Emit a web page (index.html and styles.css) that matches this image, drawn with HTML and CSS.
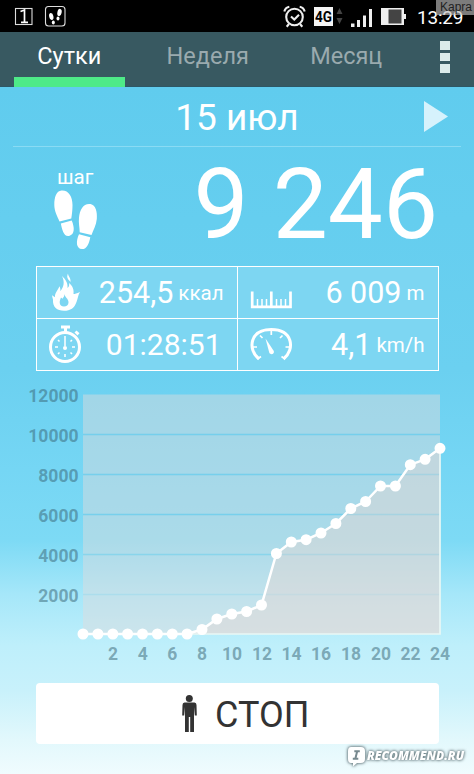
FILE: index.html
```html
<!DOCTYPE html>
<html lang="ru">
<head>
<meta charset="utf-8">
<title>Шагомер</title>
<link rel="stylesheet" href="styles.css">
</head>
<body>
<main class="screen">
  <header class="status">
    <svg class="status-left" width="60" height="32" viewBox="0 0 60 32">
      <g fill="none" stroke="#ddd" stroke-width="1.1">
        <rect x="5.500" y="8.500" width="16.500" height="16"/>
        <rect x="35.500" y="6.500" width="19.500" height="19.500" rx="3"/>
        <path d="M10.500 11.500 14.500 10V22M11 22.300h7" stroke="#fff" stroke-width="1.700"/>
      </g>
      <g fill="#fff">
        <ellipse cx="41.300" cy="16.500" rx="2.100" ry="3.600" transform="rotate(-12 41.300 16.500)"/>
        <ellipse cx="43.300" cy="22.500" rx="1.500" ry="2"/>
        <ellipse cx="49.500" cy="12.500" rx="2.100" ry="3.700" transform="rotate(12 49.500 12.500)"/>
        <ellipse cx="48" cy="18.500" rx="1.500" ry="2"/>
      </g>
    </svg>
    <svg class="status-right" width="130" height="32" viewBox="280 0 130 32">
      <g fill="none" stroke="#eee" stroke-width="2.100">
        <circle cx="294.500" cy="17" r="8.300"/>
        <path d="M284.300 11.500q1-4 5-4.700M304.700 11.500q-1-4-5-4.700M289 24l-2.300 2.700M300 24l2.300 2.700M291 16.500l3.300 3 4.700-4.700"/>
      </g>
      <rect x="314" y="7" width="19" height="19" fill="#f4f4f4"/>
      <text class="net" x="315" y="22" textLength="17" lengthAdjust="spacingAndGlyphs">4G</text>
      <path d="M336.500 14l3-6 3 6zM336.500 18l3 6 3-6z" fill="#444"/>
      <path d="M351 23.500h3.500V27H351zM357 20h3v7h-3zM363 15.500h3V27h-3zM369 9h3v18h-3z" fill="#eee"/>
      <path d="M381 8h23v6h2v5h-2v6h-23z" fill="#eee"/>
      <path d="M388.500 9.500h13v14h-13z" fill="#444"/>
    </svg>
    <span class="clock">13:29</span>
    <span class="tag">Kapra</span>
  </header>
  <nav class="tabs">
    <a class="tab active">Сутки</a>
    <a class="tab">Неделя</a>
    <a class="tab">Месяц</a>
    <span class="more"><i></i><i></i><i></i></span>
  </nav>
  <section class="date">
    <h1>15 июл</h1>
    <svg class="next" width="24" height="31" viewBox="0 0 24 31"><path d="M0 0 24 15.500 0 31z" fill="#d6f2fc"/></svg>
  </section>
  <section class="steps">
    <div class="step-label">
      <span>шаг</span>
      <svg width="44" height="60" viewBox="54 190 44 60" fill="#fff">
        <path d="M61.500 190.500c7-.5 11 6 11 14.500 0 5-.6 9.500-1.200 13.500L59.500 221.500c-2-5-5.200-10-5.200-16.500 0-8 2-14 7.200-14.500z"/>
        <path d="M60.800 223.500l10.900-3c3 7 3.200 14-2.600 15.400-5.400 1-6.900-6-8.300-12.400z"/>
        <path d="M90.500 204c5.200 1 7 8 6.300 15-.6 6.500-3.500 11-5.300 16L79.700 232.300c0-5-1.300-9-.7-14.800.8-8 4.500-14.500 11.500-13.500z"/>
        <path d="M79 234.300l11.300 2.900c-1.200 6.500-3.500 12-8.300 11.900-6-.2-6.200-8-3-14.800z"/>
      </svg>
    </div>
    <strong class="count">9 246</strong>
  </section>
  <section class="stats">
    <div class="stat kcal">
      <svg width="34" height="44" viewBox="48 270 34 44">
        <path fill="#fff" d="M62 276c4 4 6 7 5.500 12 1.500-1 2-3 1.500-5 4 3 5 7 4.500 11 1.500 0 3-.5 6.500-2-2 3-2 6-3.500 10-2 6-6 8.800-12.500 8.800-7 0-11.500-3.800-11-11-.5-2-.9-3.500-.9-4.500l2.800 2c0-5 3-7 4.500-11 1 2 1 3 1 5 3.500-5 4.500-9 1.600-15.300zM68 273.500c0 3 3 4 2.500 8.500-2-2.500-4.500-4-2.500-8.500z"/>
        <path fill="#7dd6f2" d="M64.500 294c0 3 4 4.500 4 8.500 0 2.500-2 4-4.500 4s-4.300-1.500-4.300-4c0-2.500.8-3.500 1.300-5l1.500 1.200c1.200-1.700 1.800-2.200 2-4.700z"/>
      </svg>
      <p><b>254,5</b> <small>ккал</small></p>
    </div>
    <div class="stat dist">
      <svg width="44" height="44" viewBox="249 270 44 44" fill="none" stroke="#fff">
        <path d="M252.200 291.500v15.300h38.300v-15.300M271.300 291.500v15" stroke-width="2.700"/>
        <path d="M257.500 299v8M262 299v8M266.500 299v8M276.500 299v8M281 299v8M285.500 299v8" stroke-width="1.500"/>
      </svg>
      <p><b>6 009</b> <small>m</small></p>
    </div>
    <div class="stat time">
      <svg width="34" height="44" viewBox="48 322 34 44" fill="none" stroke="#fff">
        <circle cx="65" cy="347" r="14.500" stroke-width="3"/>
        <path d="M61 327h9M65.500 327.500v5" stroke-width="3"/>
        <path d="M75.500 331.500l3 2.800" stroke-width="3"/>
        <path d="M65 336v10M65 357v-3M55 347h3M75 347h-3M58 340l1.500 1.500M72 340l-1.500 1.500M58 354l1.500-1.500M72 354l-1.500-1.500" stroke-width="1.500"/>
        <circle cx="65" cy="348" r="2" fill="#fff" stroke="none"/>
      </svg>
      <p><b>01:28:51</b></p>
    </div>
    <div class="stat speed">
      <svg width="44" height="44" viewBox="249 322 44 44" fill="none" stroke="#fff">
        <path d="M259 359C247 349 250 329.500 271.300 329.500S295.500 349 283.500 359" stroke-width="3"/>
        <path d="M271.300 330v5M260 335.500l2.500 2.500M282.500 335.500l-2.500 2.500M252.500 347h4.500M290 347h-4.500M257.500 359l3.500-2.500M285 359l-3.500-2.500" stroke-width="1.700"/>
        <path d="M265.500 338.500l8.300 12.500c1 3-3 4.500-4.500 1.800z" fill="#fff" stroke="none"/>
      </svg>
      <p><b>4,1</b> <small>km/h</small></p>
    </div>
  </section>
  <svg class="chart" width="474" height="312" viewBox="0 371 474 312">
    <rect x="83" y="394.500" width="357" height="239.500" fill="#e2dcdc" fill-opacity=".45"/>
    <path d="M83 434.500H440M83 474.500H440M83 514.500H440" stroke="#5ccbee" stroke-opacity=".65" stroke-width="1.400"/>
    <path d="M83 554.500H440" stroke="#5ccbee" stroke-opacity=".45" stroke-width="1.400"/>
    <path d="M83 594.500H440" stroke="#5ccbee" stroke-opacity=".2" stroke-width="1.400"/>
    <path d="M83 634H187.100L202 629.500 216.900 619 231.800 614 246.600 611.500 261.500 605 276.400 553.500 291.300 542 306.100 539.700 321 533 335.900 523.500 350.800 508.500 365.600 501.500 380.500 486H395.400L410.300 464.700 425.100 459.300 440 448.300V634z" fill="#e6d6d2" fill-opacity=".42"/>
    <path d="M187 634H440V448" fill="none" stroke="#e9f7f5" stroke-width="1.700"/>
    <path class="line" d="M83 634H187.100L202 629.500 216.900 619 231.800 614 246.600 611.500 261.500 605 276.400 553.500 291.300 542 306.100 539.700 321 533 335.900 523.500 350.800 508.500 365.600 501.500 380.500 486H395.400L410.300 464.700 425.100 459.300 440 448.300"/>
    <path class="dots" d="M83 634h0M97.900 634h0M112.800 634h0M127.600 634h0M142.500 634h0M157.400 634h0M172.300 634h0M187.100 634h0M202 629.500h0M216.900 619h0M231.800 614h0M246.600 611.500h0M261.500 605h0M276.400 553.500h0M291.300 542h0M306.100 539.700h0M321 533h0M335.900 523.500h0M350.800 508.500h0M365.600 501.500h0M380.500 486h0M395.400 486h0M410.300 464.700h0M425.100 459.300h0M440 448.300h0"/>
    <g class="axis y">
      <text x="78.500" y="402">12000</text><text x="78.500" y="442">10000</text><text x="78.500" y="482">8000</text>
      <text x="78.500" y="522">6000</text><text x="78.500" y="562">4000</text><text x="78.500" y="602">2000</text>
    </g>
    <g class="axis x">
      <text x="113" y="660">2</text><text x="142.700" y="660">4</text><text x="172.300" y="660">6</text><text x="202" y="660">8</text>
      <text x="232" y="660">10</text><text x="262" y="660">12</text><text x="291.500" y="660">14</text><text x="321" y="660">16</text>
      <text x="351" y="660">18</text><text x="381" y="660">20</text><text x="410.500" y="660">22</text><text x="440" y="660">24</text>
    </g>
  </svg>
  <button class="stop" type="button">
    <svg width="16" height="38" viewBox="181 694 16 38" fill="#333">
      <circle cx="189.300" cy="698.500" r="3.500"/>
      <path d="M184.500 702.500h10q2 0 2 2.500l.3 10.500h-2l-.8-8.500V732h-3.800V717h-1.400v15H185V707l-.8 8.500h-2l.3-10.500q0-2.500 2-2.500z"/>
    </svg>
    <span>СТОП</span>
  </button>
  <footer class="brand">
    <svg width="20" height="22" viewBox="0 0 20 22">
      <path d="M4 1h10q4 0 4 4v8q0 4-4 4h-4l-4 3.500V17H4q-3 0-3-4V5q0-4 3-4z" fill="#fff"/>
      <path d="M7.300 5.300h5.500M5.800 12.700h5.500M10 6l-1.500 6" stroke="#77898f" stroke-width="2"/>
    </svg>
    <span>RECOMMEND.RU</span>
  </footer>
</main>
</body>
</html>
```

FILE: styles.css
```css
* { box-sizing: border-box; }
body { margin: 0; font-family: Roboto, "Liberation Sans", sans-serif; }
svg { display: block; flex: none; }
.screen {
  position: relative;
  width: 474px;
  height: 774px;
  overflow: hidden;
  color: #fff;
  background: linear-gradient(#60ccee 87px, #65ceef 220px, #6bd0f0 370px, #75d6f4 470px, #7ddaf5 540px, #a6e7f9 595px, #beeffb 645px, #c8f1fb 690px, #e2f8fc 740px, #f0fcfe 774px);
}
.status {
  position: relative;
  display: flex;
  height: 32px;
  padding-left: 10px;
  background: #000;
}
.status-right { margin-left: 210px; }
.net { font: 700 15px Roboto, sans-serif; fill: #000; }
.clock { margin-left: 7px; font-size: 19px; line-height: 35px; letter-spacing: -.2px; }
.tag {
  position: absolute;
  top: 0;
  right: 0;
  width: 38px;
  height: 15px;
  padding-left: 4px;
  font: 12px/15px "Liberation Sans", sans-serif;
  color: #222;
  background: rgba(190, 190, 190, .65);
}
.tabs {
  display: grid;
  grid-template-columns: repeat(3, 138.500px) 1fr;
  height: 55px;
  background: #385961;
  border-bottom: 1px solid #2e5765;
}
.tab {
  position: relative;
  height: 55px;
  font-size: 23.500px;
  line-height: 48px;
  text-align: center;
  color: #9aaaae;
}
.active { color: #fff; }
.active::after {
  content: "";
  position: absolute;
  left: 14px;
  right: 13.500px;
  bottom: 0;
  height: 10px;
  background: #4eea88;
}
.more {
  display: grid;
  gap: 3px;
  align-content: start;
  padding: 9px 0 0 24px;
}
.more i { width: 10px; height: 8.500px; background: #dcebea; }
.date {
  position: relative;
  height: 60px;
  margin: 0 13px;
  padding-top: 1px;
  border-bottom: 1px solid #8adbf4;
  text-align: center;
}
.date h1 { margin: 0; font-size: 37px; font-weight: 400; line-height: 60px; }
.next { position: absolute; right: 13px; top: 14px; }
.steps { display: flex; justify-content: space-between; height: 119px; padding: 0 36px 0 54px; }
.step-label { display: grid; align-content: start; gap: 3px; padding-top: 21px; }
.step-label span { padding-left: 3px; font-size: 20.500px; line-height: 19px; }
.count { font-size: 98px; font-weight: 400; line-height: 116px; }
.stats {
  display: grid;
  grid-template-columns: 200px 200px;
  grid-template-rows: 51px 51px;
  gap: 1px;
  width: 403px;
  height: 105px;
  margin-left: 35.500px;
  border: 1px solid #fff;
  background: #fff;
}
.stat {
  display: flex;
  justify-content: space-between;
  padding: 3px 13px 0 11px;
  background: #7dd6f2;
}
.stat p {
  display: flex;
  align-items: baseline;
  gap: 6px;
  margin: 0;
  line-height: 46px;
  white-space: nowrap;
}
.stat b { font-size: 30.500px; font-weight: 400; }
.time b { font-size: 30px; }
.time { padding-right: 15px; }
.kcal p { gap: 5px; }
.dist p, .speed p { gap: 5px; }
.stat small { position: relative; top: -3px; font-size: 20.500px; }
.chart { height: 312px; }
.line { fill: none; stroke: #fff; stroke-width: 2.500; }
.dots { fill: none; stroke: #fff; stroke-width: 11; stroke-linecap: round; }
.axis { font-size: 17.500px; font-weight: 700; fill: #386474; fill-opacity: .52; }
.y { text-anchor: end; }
.x { text-anchor: middle; }
.stop {
  display: flex;
  align-items: flex-start;
  gap: 18px;
  width: 403px;
  height: 61px;
  margin: 0 0 0 36px;
  padding: 11px 0 0 145px;
  border: 0;
  border-radius: 4px;
  background: #fff;
  color: #333;
  font: 36px/42px Roboto, sans-serif;
}
.brand {
  display: flex;
  margin: 2px 0 0 347px;
  font: italic 800 12px/20px "Open Sans", sans-serif;
  filter: drop-shadow(0 0 1.500px #5d7378) drop-shadow(0 0 1px #98a8ad);
}
```
